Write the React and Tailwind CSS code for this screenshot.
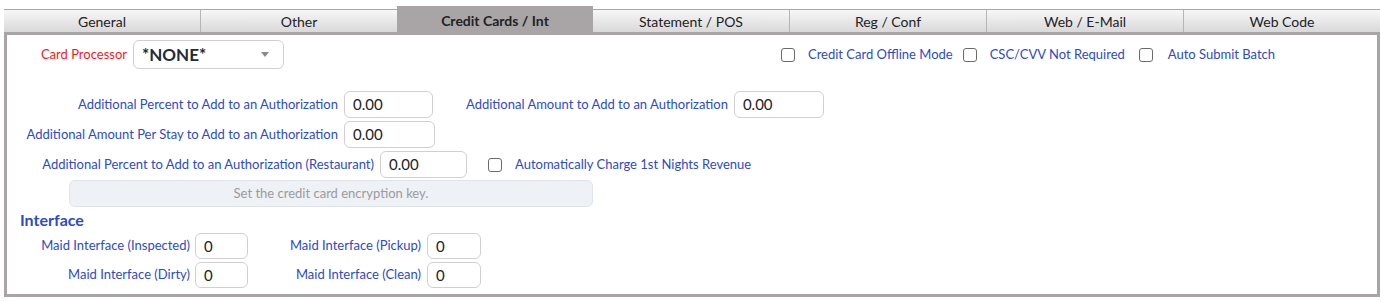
import { useState } from 'react'

const TABS = ['General', 'Other', 'Credit Cards / Int', 'Statement / POS', 'Reg / Conf', 'Web / E-Mail', 'Web Code']
const ACTIVE = 2

const BLUE = 'text-[#2d4bc3]'

export default function App() {
  const [checks, setChecks] = useState({})

  function toggle(key) {
    setChecks(c => ({ ...c, [key]: !c[key] }))
  }

  return (
    <div className="w-[1381px] h-[302px] bg-white font-['Lato','Noto_Sans',sans-serif] text-[13px]">
      <div className="ml-[4px] w-[1376px] h-[32px] flex items-end">
        {TABS.map((t, i) =>
          i === ACTIVE ? (
            <div key={t} className="flex-1 h-[26px] bg-[#a9a5a7] flex items-center justify-center pt-[2px] text-[14px] font-bold text-[#222]">
              {t}
            </div>
          ) : (
            <div
              key={t}
              className={`flex-1 h-[23px] border-t border-[#aaa6a8] bg-linear-to-b from-[#f7f7f7] to-[#d9d9d9] flex items-center justify-center text-[14px] text-[#222] ${
                i === 0 || i === ACTIVE + 1 ? '' : 'border-l border-l-[#b5b5b5]'
              }`}
            >
              {t}
            </div>
          )
        )}
      </div>

      <div className="ml-[4px] w-[1376px] h-[265px] border-[3px] border-[#a9a5a7] flex flex-col">
        {/* card processor row */}
        <div className="mt-[5px] flex items-center h-[29px]">
          <div className="w-[120px] text-right text-[#f01b1b]">Card Processor</div>
          <div className="ml-[6px] w-[151px] h-[29px] rounded-[6px] border border-[#d0d0d0] flex items-center justify-between pl-[8px] pr-[14px]">
            <span className="text-[17px] font-bold text-[#222b36]">*NONE*</span>
            <svg width="8" height="5" viewBox="0 0 8 5"><path d="M0 0h8L4 5z" fill="#8a8a8a" /></svg>
          </div>
          <div className="ml-[497px] flex items-center">
            <Check on={checks.offline} onClick={() => toggle('offline')} />
            <span className={`ml-[13px] ${BLUE}`}>Credit Card Offline Mode</span>
            <div className="ml-[10px]"><Check on={checks.csc} onClick={() => toggle('csc')} /></div>
            <span className={`ml-[13px] ${BLUE}`}>CSC/CVV Not Required</span>
            <div className="ml-[14px]"><Check on={checks.auto} onClick={() => toggle('auto')} /></div>
            <span className={`ml-[15px] ${BLUE}`}>Auto Submit Batch</span>
          </div>
        </div>

        <div className="mt-[22px] flex items-center h-[27px]">
          <Label w="w-[331px]">Additional Percent to Add to an Authorization</Label>
          <Input w="w-[89px]" value="0.00" />
          <span className={`ml-[33px] mr-[6px] ${BLUE}`}>Additional Amount to Add to an Authorization</span>
          <Input w="w-[90px]" value="0.00" />
        </div>

        <div className="mt-[3px] flex items-center h-[27px]">
          <Label w="w-[331px]">Additional Amount Per Stay to Add to an Authorization</Label>
          <Input w="w-[91px]" value="0.00" />
        </div>

        <div className="mt-[3px] flex items-center h-[27px]">
          <Label w="w-[367px]">Additional Percent to Add to an Authorization (Restaurant)</Label>
          <Input w="w-[87px]" value="0.00" />
          <div className="ml-[21px]"><Check on={checks.nights} onClick={() => toggle('nights')} /></div>
          <span className={`ml-[13px] ${BLUE}`}>Automatically Charge 1st Nights Revenue</span>
        </div>

        <button className="mt-[2px] ml-[62px] w-[524px] h-[27px] rounded-[6px] border border-[#dfe4eb] bg-[#eef1f6] text-[#9b9b9b] text-[13px]">
          Set the credit card encryption key.
        </button>

        <div className="mt-[3px] ml-[13px] h-[20px] leading-[20px] text-[16px] font-bold text-[#2d4bc3]">Interface</div>

        <div className="mt-[3px] flex items-center h-[26px]">
          <Label w="w-[183px]" gap="mr-[5px]">Maid Interface (Inspected)</Label>
          <Input w="w-[53px]" value="0" />
          <Label w="w-[173px]" gap="mr-[6px]">Maid Interface (Pickup)</Label>
          <Input w="w-[54px]" value="0" />
        </div>
        <div className="mt-[3px] flex items-center h-[26px]">
          <Label w="w-[183px]" gap="mr-[5px]">Maid Interface (Dirty)</Label>
          <Input w="w-[53px]" value="0" />
          <Label w="w-[173px]" gap="mr-[6px]">Maid Interface (Clean)</Label>
          <Input w="w-[54px]" value="0" />
        </div>
      </div>
    </div>
  )
}

function Label({ w, gap = 'mr-[6px]', children }) {
  return <div className={`${w} ${gap} shrink-0 text-right whitespace-nowrap ${BLUE}`}>{children}</div>
}

function Input({ w, value }) {
  return (
    <div className={`${w} h-full shrink-0 rounded-[6px] border border-[#d0d0d0] flex items-center pl-[8px] text-[15px] text-[#222]`}>
      {value}
    </div>
  )
}

function Check({ on, onClick }) {
  return (
    <div
      onClick={onClick}
      className="w-[14px] h-[14px] rounded-[3px] border border-[#6b6b6b] bg-white flex items-center justify-center cursor-pointer"
    >
      {on && <span className="text-[10px] leading-none">✓</span>}
    </div>
  )
}
